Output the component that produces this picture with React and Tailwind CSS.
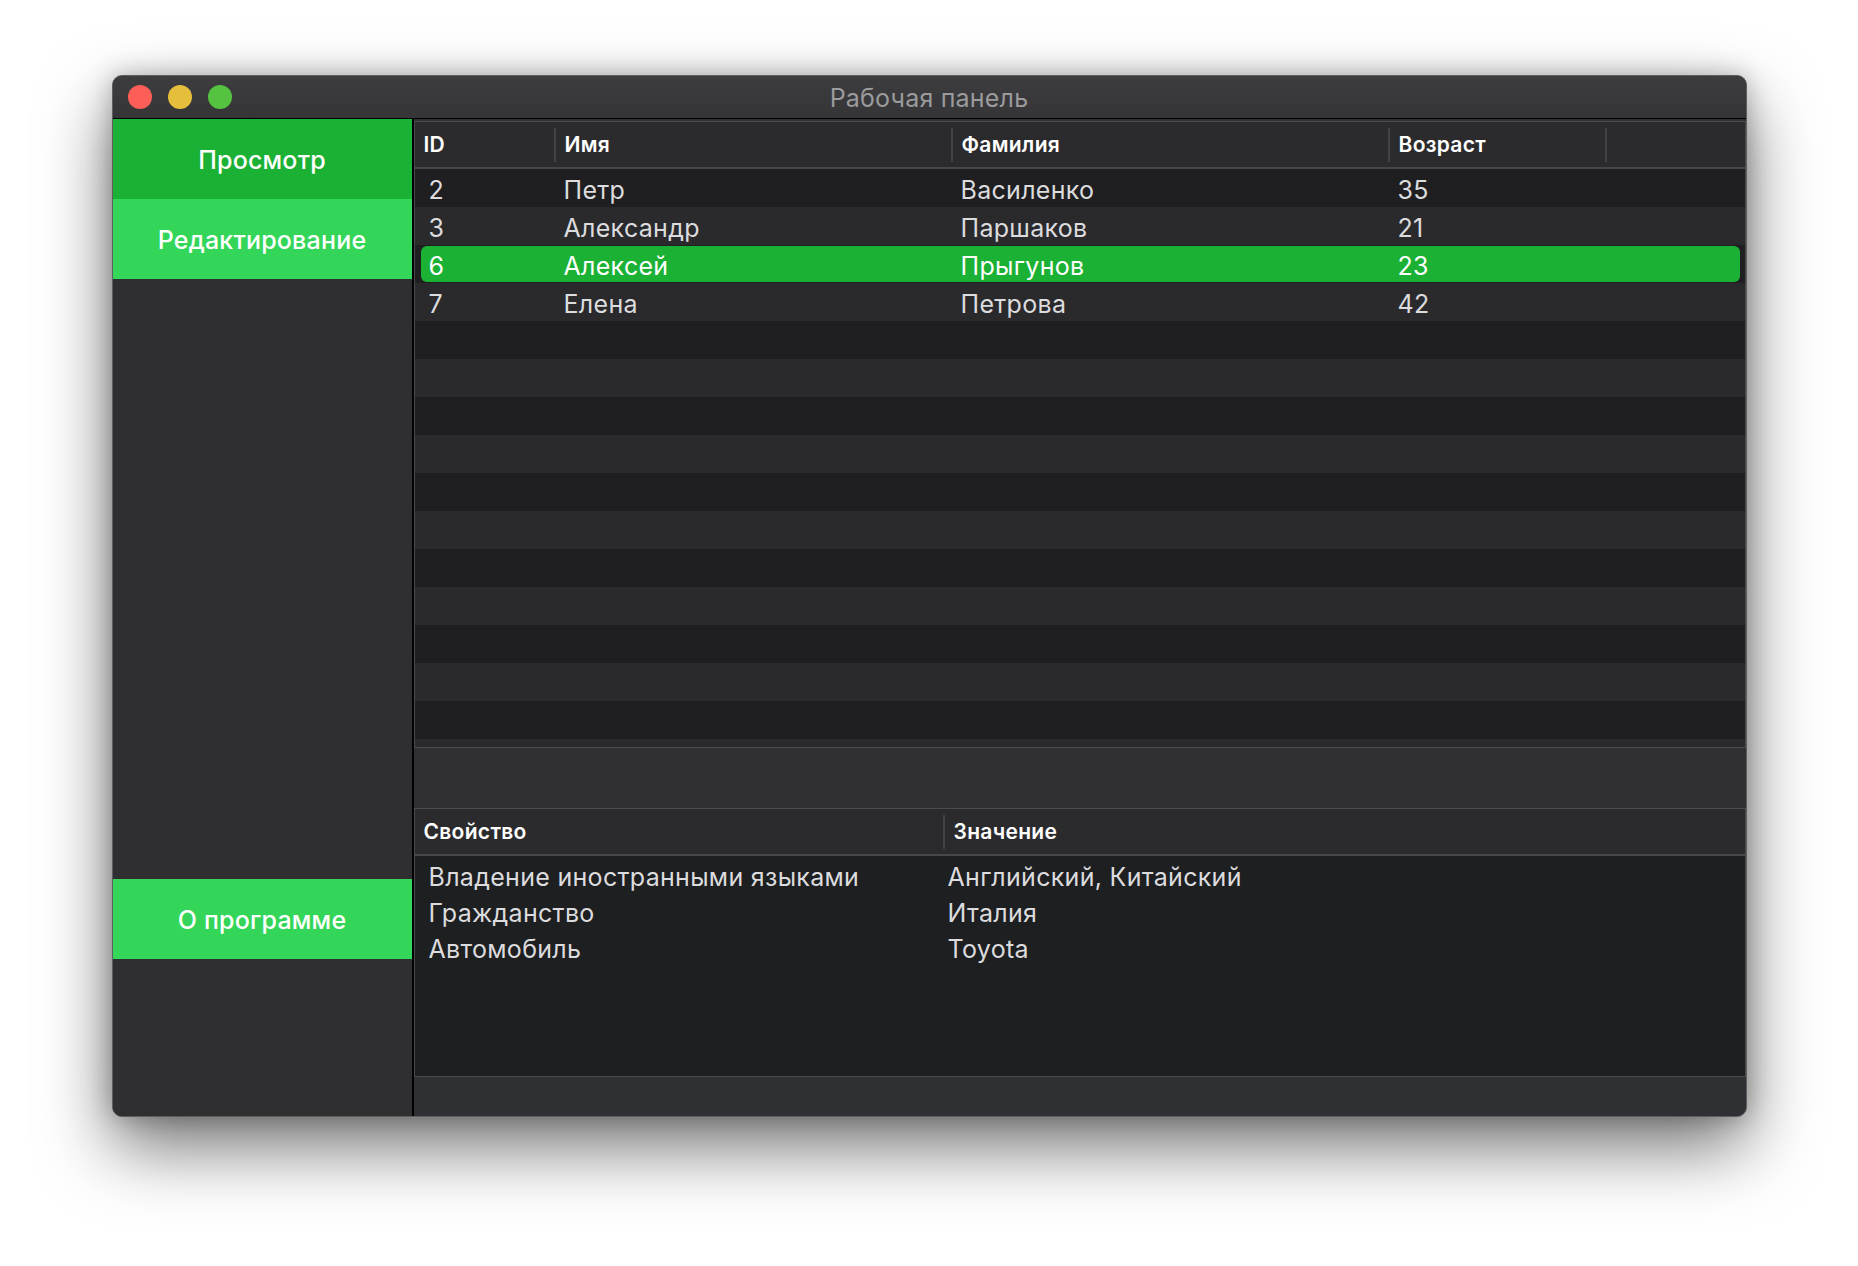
import React from 'react';

const people = [
  { id: 2, name: 'Петр', surname: 'Василенко', age: 35 },
  { id: 3, name: 'Александр', surname: 'Паршаков', age: 21 },
  { id: 6, name: 'Алексей', surname: 'Прыгунов', age: 23 },
  { id: 7, name: 'Елена', surname: 'Петрова', age: 42 },
];

const props = [
  ['Владение иностранными языками', 'Английский, Китайский'],
  ['Гражданство', 'Италия'],
  ['Автомобиль', 'Toyota'],
];

const SELECTED = 6;
const TOTAL_ROWS = 16;

// шапка колонки с коротким разделителем справа
function HeadCell({ children, divider = true }) {
  return (
    <div className="flex items-center justify-between pl-[9px]">
      <span>{children}</span>
      {divider && <span className="h-[34px] w-[2px] bg-[#424245]" />}
    </div>
  );
}

export default function App() {
  const rows = Array.from({ length: TOTAL_ROWS }, (_, i) => people[i] || null);

  return (
    <div className="min-h-screen bg-white pt-[75px] font-['Inter',_'Noto_Sans',_sans-serif]">
      <div className="mx-auto flex h-[1042px] w-[1635px] flex-col overflow-hidden rounded-[10px] border border-[#5e5e61] bg-[#2f3033] shadow-[0_30px_70px_rgba(0,0,0,0.55),0_0_24px_rgba(0,0,0,0.25)]">
        {/* title bar */}
        <div className="grid h-[43px] shrink-0 grid-cols-[1fr_auto_1fr] items-center border-b border-black bg-gradient-to-b from-[#3d3d40] to-[#353538] px-[15px]">
          <div className="flex gap-[16px]">
            <span className="h-[24px] w-[24px] rounded-full bg-[#fd5f58]" />
            <span className="h-[24px] w-[24px] rounded-full bg-[#e5bf3c]" />
            <span className="h-[24px] w-[24px] rounded-full bg-[#55c33f]" />
          </div>
          <div className="pt-[4px] text-[25px] tracking-[0.2px] text-[#9b9b9d]">Рабочая панель</div>
          <div />
        </div>

        <div className="flex min-h-0 flex-1">
          {/* sidebar */}
          <div className="flex w-[299px] shrink-0 flex-col bg-[#2f2f32] text-[25px] font-medium tracking-[0.2px] text-white">
            <div className="flex h-[80px] items-center justify-center bg-[#1bb134] pt-[4px]">Просмотр</div>
            <div className="flex h-[80px] items-center justify-center bg-[#33d659] pt-[4px]">Редактирование</div>
            <div className="flex-1" />
            <div className="flex h-[80px] items-center justify-center bg-[#33d659] pt-[4px]">О программе</div>
            <div className="h-[157px]" />
          </div>
          <div className="w-[2px] shrink-0 bg-black" />

          {/* content */}
          <div className="flex min-w-0 flex-1 flex-col pt-[2px]">
            {/* people table */}
            <div className="flex h-[627px] shrink-0 flex-col overflow-hidden border border-[#4b4b4e]">
              <div className="grid h-[47px] shrink-0 grid-cols-[141px_397px_437px_217px_1fr] border-b-2 border-[#48484b] bg-[#2b2b2e] text-[21px] font-semibold tracking-[0.3px] text-white">
                <HeadCell>ID</HeadCell>
                <HeadCell>Имя</HeadCell>
                <HeadCell>Фамилия</HeadCell>
                <HeadCell>Возраст</HeadCell>
                <HeadCell divider={false} />
              </div>
              <div className="min-h-0 flex-1 overflow-hidden">
                {rows.map((p, i) => {
                  const sel = p && p.id === SELECTED;
                  return (
                    <div key={i} className={`h-[38px] ${i % 2 === 0 ? 'bg-[#1f1f21]' : 'bg-[#2a2a2d]'} py-[1px] pl-[6px] pr-[5px]`}>
                      <div
                        className={`grid h-full grid-cols-[135px_397px_437px_217px_1fr] items-center rounded-[6px] pt-[2px] text-[25px] tracking-[0.3px] ${
                          sel ? 'bg-[#1bb134] text-white' : 'text-[#dcdcde]'
                        }`}
                      >
                        {p && (
                          <>
                            <span className="pl-[8px]">{p.id}</span>
                            <span className="pl-[8px]">{p.name}</span>
                            <span className="pl-[8px]">{p.surname}</span>
                            <span className="pl-[8px]">{p.age}</span>
                            <span />
                          </>
                        )}
                      </div>
                    </div>
                  );
                })}
              </div>
            </div>

            <div className="h-[60px] shrink-0 bg-[#303033]" />

            {/* properties table */}
            <div className="flex h-[269px] shrink-0 flex-col overflow-hidden border border-[#4b4b4e]">
              <div className="grid h-[47px] shrink-0 grid-cols-[530px_1fr] border-b-2 border-[#48484b] bg-[#2b2b2e] text-[21px] font-semibold tracking-[0.3px] text-white">
                <HeadCell>Свойство</HeadCell>
                <HeadCell divider={false}>Значение</HeadCell>
              </div>
              <div className="flex-1 bg-[#1e1f21] pl-[6px] pt-[3px] text-[25px] tracking-[0.3px] text-[#dcdcde]">
                {props.map(([k, v]) => (
                  <div key={k} className="grid h-[36px] grid-cols-[519px_1fr] items-center">
                    <span className="pl-[8px]">{k}</span>
                    <span className="pl-[8px]">{v}</span>
                  </div>
                ))}
              </div>
            </div>

            <div className="flex-1" />
          </div>
        </div>
      </div>
    </div>
  );
}
